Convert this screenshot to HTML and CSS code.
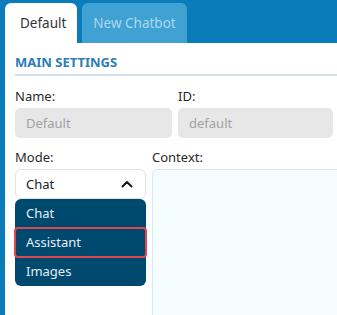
FILE: index.html
```html
<!DOCTYPE html>
<html lang="en">
  <head>
    <meta charset="UTF-8" />
    <meta name="viewport" content="width=device-width, initial-scale=1.0" />
    <title>Chatbot Settings</title>
    <link rel="stylesheet" href="styles.css">
  </head>
  <body>
    <div class="tabs">
      <div class="tabs__tab tabs__tab--active">Default</div>
      <div class="tabs__tab tabs__tab--new">New Chatbot</div>
    </div>
    <div class="panel">
      <h2 class="panel__title">MAIN SETTINGS</h2>
      <div class="form">
        <div class="field">
          <label class="field__label">Name:</label>
          <input class="field__input" type="text" placeholder="Default" disabled>
        </div>
        <div class="field">
          <label class="field__label">ID:</label>
          <input class="field__input" type="text" placeholder="default" disabled>
        </div>
      </div>
      <div class="form form--mode">
        <div class="field field--mode">
          <label class="field__label">Mode:</label>
          <div class="select">
            <span>Chat</span>
            <svg class="select__chevron" width="12" height="8" viewBox="0 0 12 8">
              <polyline points="1.5,6.5 6,2 10.5,6.5" fill="none" stroke="#1a1a1a" stroke-width="2" stroke-linecap="round" stroke-linejoin="round"/>
            </svg>
          </div>
          <ul class="menu">
            <li class="menu__item">Chat</li>
            <li class="menu__item menu__item--focus">Assistant</li>
            <li class="menu__item">Images</li>
          </ul>
        </div>
        <div class="field field--context">
          <label class="field__label">Context:</label>
          <textarea class="field__area"></textarea>
        </div>
      </div>
    </div>
  </body>
</html>
```
FILE: styles.css
```css
* {
  margin: 0;
  padding: 0;
  box-sizing: border-box;
}
html,
body {
  height: 100%;
  overflow: hidden;
}
body {
  background-color: #0a7cba;
  font-family: "Noto Sans", sans-serif;
  font-size: 13px;
  color: #2a2a2a;
  display: flex;
  flex-direction: column;
}
ul {
  list-style: none;
}

/* Tabs */
.tabs {
  display: flex;
  gap: 5px;
  padding: 3px 0 0 5px;
}
.tabs__tab {
  height: 40px;
  display: flex;
  align-items: center;
  border-radius: 6px 6px 0 0;
  white-space: nowrap;
  font-size: 13.5px;
}
.tabs__tab--active {
  width: 72px;
  padding-left: 15px;
  background-color: #fff;
  color: #333;
}
.tabs__tab--new {
  width: 105px;
  justify-content: center;
  background-color: #3fa2d3;
  color: #acd8f1;
}

/* Panel */
.panel {
  flex: 1;
  margin-left: 5px;
  background-color: #fff;
  padding-left: 10px;
  display: flex;
  flex-direction: column;
  overflow: hidden;
}
.panel__title {
  font-size: 13px;
  font-weight: 700;
  color: #2a7db6;
  height: 33px;
  padding-top: 10px;
  border-bottom: 2px solid #d5dee9;
}

.form {
  display: grid;
  grid-template-columns: 157px 155px;
  column-gap: 6px;
  padding-top: 12px;
}
.form--mode {
  flex: 1;
  grid-template-columns: 131px 1fr;
  padding-top: 11px;
}
.field {
  display: flex;
  flex-direction: column;
}
.field--mode {
  position: relative;
}
.field__label {
  height: 20px;
  line-height: 16px;
  color: #2a2a2a;
}
.field__input {
  height: 30px;
  border: none;
  border-radius: 5px;
  background-color: #e7e7e7;
  padding: 0 11px;
  font: inherit;
}
.field__input::placeholder {
  color: #a3a3a3;
}
.field__area {
  flex: 1;
  width: 100%;
  border: 1px solid #d4ecf3;
  border-right: none;
  border-bottom: none;
  border-radius: 5px 0 0 0;
  background-color: #f6fdff;
  resize: none;
}

/* Select */
.select {
  height: 30px;
  border: 1px solid #e2e2e2;
  border-radius: 6px;
  padding: 0 12px 0 10px;
  display: flex;
  align-items: center;
  justify-content: space-between;
  color: #222;
}
.menu {
  position: absolute;
  top: 50px;
  left: 0;
  width: 131px;
  background-color: #00496e;
  border-radius: 6px;
  color: #e4eef4;
}
.menu__item {
  height: 29px;
  line-height: 29px;
  padding-left: 11px;
}
.menu__item--focus {
  outline: 2px solid #e0474c;
  outline-offset: -1px;
  border-radius: 3px;
}
```
